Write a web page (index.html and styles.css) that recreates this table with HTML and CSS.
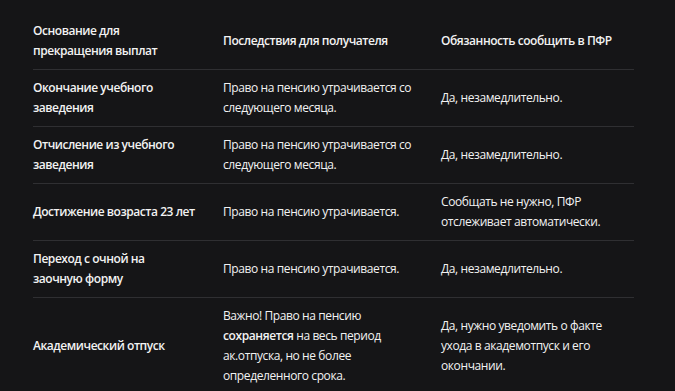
FILE: index.html
```html
<!DOCTYPE html>
<html lang="ru">
<head>
<meta charset="utf-8">
<link rel="stylesheet" href="styles.css">
</head>
<body>
<div class="wrap">
<table class="tbl">
  <colgroup><col class="c1"><col class="c2"><col class="c3"></colgroup>
  <thead>
    <tr><th>Основание для прекращения выплат</th><th>Последствия для получателя</th><th>Обязанность сообщить в ПФР</th></tr>
  </thead>
  <tbody>
    <tr><th>Окончание учебного заведения</th><td>Право на пенсию утрачивается со следующего месяца.</td><td>Да, незамедлительно.</td></tr>
    <tr><th>Отчисление из учебного заведения</th><td>Право на пенсию утрачивается со следующего месяца.</td><td>Да, незамедлительно.</td></tr>
    <tr><th>Достижение возраста 23 лет</th><td>Право на пенсию утрачивается.</td><td>Сообщать не нужно, ПФР отслеживает автоматически.</td></tr>
    <tr><th>Переход с очной на заочную&nbsp;форму</th><td>Право на пенсию утрачивается.</td><td>Да, незамедлительно.</td></tr>
    <tr><th>Академический отпуск</th><td>Важно! Право на пенсию <b>сохраняется</b> на весь период ак.отпуска, но не более определенного срока.</td><td>Да, нужно уведомить о факте ухода в академотпуск и его окончании.</td></tr>
  </tbody>
</table>
</div>
</body>
</html>
```
FILE: styles.css
```css
html, body { margin: 0; padding: 0; background: #151517; }
body { font-family: "Open Sans", "Noto Sans", sans-serif; color: #f2f2f2; font-size: 12px; line-height: 20px; letter-spacing: -0.4px; }
.wrap { padding: 13px 0 0 33px; }
.tbl { border-collapse: collapse; table-layout: fixed; width: 601px; }
.c1 { width: 190px; }
.c2 { width: 218px; }
.c3 { width: 193px; }
.tbl th, .tbl td { text-align: left; vertical-align: middle; padding: 8px 22px 8px 0; }
.tbl th:first-child { padding-right: 24px; }
.tbl th:last-child, .tbl td:last-child { padding-right: 8px; }
.tbl th { font-weight: 600; letter-spacing: -0.45px; }
.tbl td { font-weight: 400; }
.tbl b { font-weight: 600; }
.tbl tr { border-bottom: 1px solid #2f2f32; }
```
